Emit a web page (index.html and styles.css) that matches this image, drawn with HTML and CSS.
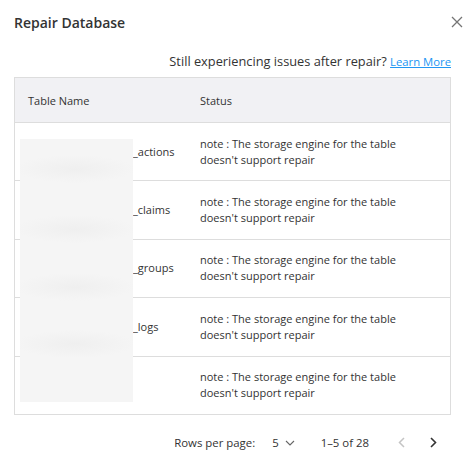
FILE: index.html
```html
<!DOCTYPE html>
<html>
<head>
  <meta charset="utf-8">
  <title>Repair Database</title>
  <link rel="stylesheet" href="styles.css">
</head>
<body>
  <div class="dialog">
    <div class="dialog-head">
      <h1>Repair Database</h1>
      <button class="close" type="button" aria-label="Close">
        <svg width="12" height="12" viewBox="0 0 12 12"><path d="M1 1L11 11M11 1L1 11" stroke="#757575" stroke-width="1.3" fill="none"/></svg>
      </button>
    </div>

    <p class="hint">Still experiencing issues after repair? <a href="#">Learn More</a></p>

    <div class="table-wrap">
      <table class="repair">
        <thead>
          <tr><th class="col-name">Table Name</th><th>Status</th></tr>
        </thead>
        <tbody>
          <tr><td class="name"><span class="hidden-part"></span>_actions</td><td class="status">note : The storage engine for the table doesn't support repair</td></tr>
          <tr><td class="name"><span class="hidden-part"></span>_claims</td><td class="status">note : The storage engine for the table doesn't support repair</td></tr>
          <tr><td class="name"><span class="hidden-part"></span>_groups</td><td class="status">note : The storage engine for the table doesn't support repair</td></tr>
          <tr><td class="name"><span class="hidden-part"></span>_logs</td><td class="status">note : The storage engine for the table doesn't support repair</td></tr>
          <tr><td class="name"><span class="hidden-part"></span></td><td class="status">note : The storage engine for the table doesn't support repair</td></tr>
        </tbody>
      </table>
      <div class="redact"></div>
    </div>

    <div class="pager">
      <span class="pager-label">Rows per page:</span>
      <span class="pager-select">5
        <svg width="10" height="6" viewBox="0 0 10 6"><path d="M1 1L5 5L9 1" stroke="#666" stroke-width="1.1" fill="none"/></svg>
      </span>
      <span class="pager-range">1–5 of 28</span>
      <button class="pager-btn" type="button" disabled>
        <svg width="7" height="11" viewBox="0 0 7 11"><path d="M6 1L1.5 5.5L6 10" stroke="#c4c4c4" stroke-width="1.5" fill="none"/></svg>
      </button>
      <button class="pager-btn" type="button">
        <svg width="7" height="11" viewBox="0 0 7 11"><path d="M1 1L5.5 5.5L1 10" stroke="#333" stroke-width="1.6" fill="none"/></svg>
      </button>
    </div>
  </div>
</body>
</html>
```

FILE: styles.css
```css
body {
  margin: 0;
  font-family: "Open Sans", Arial, sans-serif;
  color: #333;
  background: #fff;
}

.dialog {
  width: 469px;
  height: 469px;
  box-sizing: border-box;
  padding: 0 18px 0 14px;
}

.dialog-head {
  display: flex;
  justify-content: space-between;
  align-items: center;
  height: 44px;
}

.dialog-head h1 {
  margin: 0;
  font-size: 14px;
  font-weight: 600;
  color: #333;
}

.close {
  border: none;
  background: none;
  padding: 0;
  margin-right: -12px;
  width: 12px;
  height: 12px;
  cursor: pointer;
}

.hint {
  margin: 7px 0 0;
  text-align: right;
  font-size: 12.8px;
  line-height: 20px;
  color: #333;
}

.hint a {
  color: #2196f3;
  font-size: 11.3px;
}

.table-wrap {
  position: relative;
  margin-top: 5px;
}

.repair {
  width: 100%;
  border-collapse: collapse;
  border: 1px solid #ddd;
  font-size: 11px;
}

.repair th {
  background: #f1f1f4;
  font-weight: 400;
  text-align: left;
  height: 44px;
  padding: 0 0 0 13px;
  color: #333;
}

.repair .col-name {
  width: 159px;
}

.repair td {
  border-top: 1px solid #ddd;
  height: 57.4px;
  padding: 0 0 0 13px;
  vertical-align: middle;
  line-height: 16px;
}

.repair .name {
  padding-left: 5px;
}

.hidden-part {
  display: inline-block;
  width: 113px;
}

.repair .status {
  padding-right: 30px;
}

.redact {
  position: absolute;
  left: 6px;
  top: 62px;
  width: 113px;
  height: 263px;
  background:
    radial-gradient(ellipse 60px 14px at 55px 30px, #efefef, transparent),
    radial-gradient(ellipse 60px 14px at 55px 90px, #efefef, transparent),
    radial-gradient(ellipse 60px 14px at 55px 148px, #efefef, transparent),
    radial-gradient(ellipse 60px 14px at 55px 205px, #efefef, transparent),
    #f5f5f5;
}

.pager {
  display: flex;
  align-items: center;
  justify-content: flex-end;
  margin-top: 14px;
  margin-right: 2px;
  font-size: 11.4px;
  color: #333;
}

.pager-label {
  margin-right: 17px;
}

.pager-select {
  display: flex;
  align-items: center;
  gap: 6px;
  margin-right: 26px;
}

.pager-range {
  margin-right: 16px;
}

.pager-btn {
  border: none;
  background: none;
  width: 32px;
  height: 28px;
  padding: 0;
  display: flex;
  align-items: center;
  justify-content: center;
}
```
